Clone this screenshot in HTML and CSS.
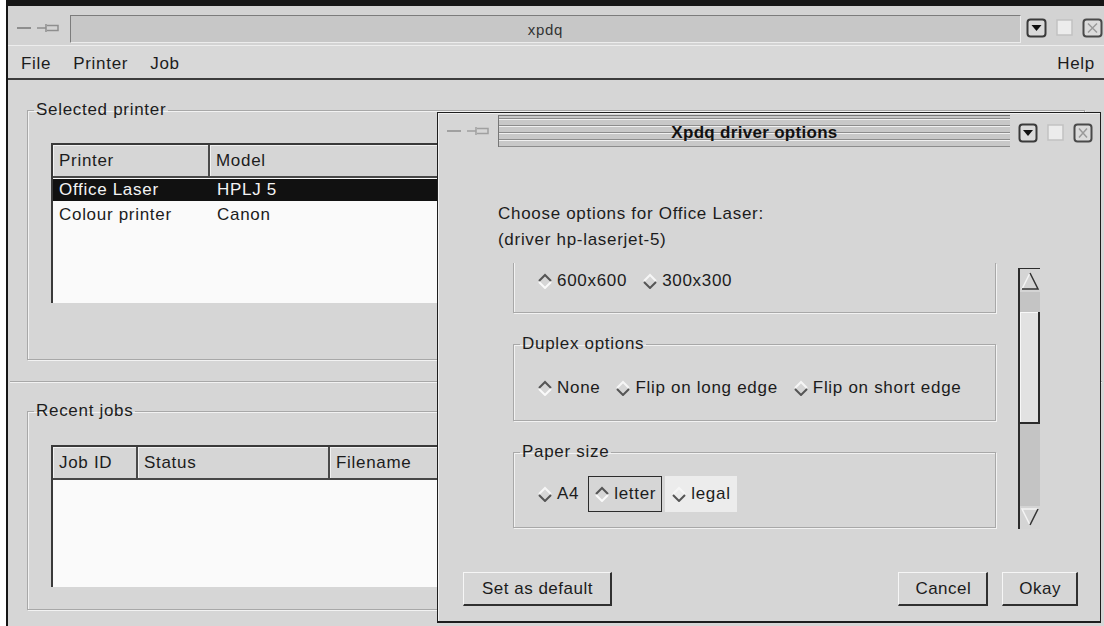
FILE: index.html
```html
<!DOCTYPE html>
<html>
<head>
<meta charset="utf-8">
<title>xpdq</title>
<link rel="stylesheet" href="styles.css">
</head>
<body>
<div class="main-win">
  <div class="titlebar">
    <div class="tb-left">
      <span class="tb-btn"><svg width="16" height="4" viewBox="0 0 16 4"><rect x="1" y="1" width="14" height="2" fill="#8e8e8e"/></svg></span>
      <span class="tb-btn"><svg width="24" height="12" viewBox="0 0 24 12"><path d="M1 6H10M10 2V10M11 3.5H22V8.5H11" fill="none" stroke="#8e8e8e" stroke-width="1.5"/></svg></span>
    </div>
    <div class="tb-field"><span class="tb-title">xpdq</span></div>
    <div class="tb-right">
      <span class="wbtn"><svg width="21" height="20" viewBox="0 0 21 20"><rect x="1.5" y="1.5" width="18" height="17" rx="3" fill="#dadada" stroke="#3a3a3a" stroke-width="2"/><path d="M5.5 7H15.5L10.5 13Z" fill="#111"/></svg></span>
      <span class="wbtn"><svg width="19" height="20" viewBox="0 0 19 20"><rect x="2" y="2" width="15" height="15" fill="#ececec" stroke="#c2c2c2" stroke-width="1.5"/></svg></span>
      <span class="wbtn"><svg width="21" height="20" viewBox="0 0 21 20"><rect x="1.5" y="1.5" width="18" height="17" rx="3" fill="#dcdcdc" stroke="#4a4a4a" stroke-width="2"/><path d="M6 5.5L15 14.5M15 5.5L6 14.5" stroke="#9a9a9a" stroke-width="1.5"/></svg></span>
    </div>
  </div>
  <div class="menubar">
    <span class="menu-item">File</span>
    <span class="menu-item">Printer</span>
    <span class="menu-item">Job</span>
    <span class="menu-fill"></span>
    <span class="menu-item">Help</span>
  </div>
  <div class="main-body">
    <fieldset class="group printers">
      <legend>Selected printer</legend>
      <div class="list printer-list">
        <div class="list-head">
          <span class="hcell col-printer">Printer</span>
          <span class="hcell col-model">Model</span>
        </div>
        <div class="list-rows">
          <div class="row selected"><span class="cell col-printer">Office Laser</span><span class="cell col-model">HPLJ 5</span></div>
          <div class="row"><span class="cell col-printer">Colour printer</span><span class="cell col-model">Canon</span></div>
        </div>
      </div>
    </fieldset>
    <div class="separator"></div>
    <fieldset class="group jobs">
      <legend>Recent jobs</legend>
      <div class="list job-list">
        <div class="list-head">
          <span class="hcell col-id">Job ID</span>
          <span class="hcell col-status">Status</span>
          <span class="hcell col-file">Filename</span>
        </div>
        <div class="list-rows"></div>
      </div>
    </fieldset>
  </div>
</div>

<div class="dialog">
  <div class="d-titlebar">
    <div class="d-tb-left">
      <span class="tb-btn"><svg width="16" height="4" viewBox="0 0 16 4"><rect x="1" y="1" width="14" height="2" fill="#a0a0a0"/></svg></span>
      <span class="tb-btn"><svg width="24" height="12" viewBox="0 0 24 12"><path d="M1 6H10M10 2V10M11 3.5H22V8.5H11" fill="none" stroke="#a0a0a0" stroke-width="1.5"/></svg></span>
    </div>
    <div class="d-tb-field"><span class="d-title">Xpdq driver options</span></div>
    <div class="d-tb-right">
      <span class="wbtn"><svg width="20" height="20" viewBox="0 0 20 20"><rect x="1.5" y="1.5" width="17" height="17" rx="3" fill="#dadada" stroke="#3a3a3a" stroke-width="2"/><path d="M5 7H15L10 13Z" fill="#111"/></svg></span>
      <span class="wbtn"><svg width="23" height="20" viewBox="0 0 23 20"><rect x="4" y="2" width="15" height="15" fill="#ececec" stroke="#c2c2c2" stroke-width="1.5"/></svg></span>
      <span class="wbtn"><svg width="20" height="20" viewBox="0 0 20 20"><rect x="1.5" y="1.5" width="17" height="17" rx="3" fill="#dcdcdc" stroke="#4a4a4a" stroke-width="2"/><path d="M6 5.5L14 14.5M14 5.5L6 14.5" stroke="#9a9a9a" stroke-width="1.5"/></svg></span>
    </div>
  </div>

  <div class="d-body">
    <p class="d-intro">Choose options for Office Laser:<br>(driver hp-laserjet-5)</p>

    <div class="scroll-area">
      <div class="viewport">
        <div class="frame clipped">
          <div class="radio-row">
            <span class="radio on"><svg width="16" height="16" viewBox="0 0 16 16"><polyline points="2,8 8,2 14,8" fill="none" stroke="#555" stroke-width="2"/><polyline points="2,9 8,15 14,9" fill="none" stroke="#fafafa" stroke-width="2"/></svg>600x600</span>
            <span class="radio"><svg width="16" height="16" viewBox="0 0 16 16"><polyline points="2,8 8,2 14,8" fill="none" stroke="#f6f6f6" stroke-width="2"/><polyline points="2,9 8,15 14,9" fill="none" stroke="#555" stroke-width="2"/></svg>300x300</span>
          </div>
        </div>

        <fieldset class="group frame">
          <legend>Duplex options</legend>
          <div class="radio-row">
            <span class="radio on"><svg width="16" height="16" viewBox="0 0 16 16"><polyline points="2,8 8,2 14,8" fill="none" stroke="#555" stroke-width="2"/><polyline points="2,9 8,15 14,9" fill="none" stroke="#fafafa" stroke-width="2"/></svg>None</span>
            <span class="radio"><svg width="16" height="16" viewBox="0 0 16 16"><polyline points="2,8 8,2 14,8" fill="none" stroke="#f6f6f6" stroke-width="2"/><polyline points="2,9 8,15 14,9" fill="none" stroke="#555" stroke-width="2"/></svg>Flip on long edge</span>
            <span class="radio"><svg width="16" height="16" viewBox="0 0 16 16"><polyline points="2,8 8,2 14,8" fill="none" stroke="#f6f6f6" stroke-width="2"/><polyline points="2,9 8,15 14,9" fill="none" stroke="#555" stroke-width="2"/></svg>Flip on short edge</span>
          </div>
        </fieldset>

        <fieldset class="group frame paper">
          <legend>Paper size</legend>
          <div class="radio-row">
            <span class="radio"><svg width="16" height="16" viewBox="0 0 16 16"><polyline points="2,8 8,2 14,8" fill="none" stroke="#f6f6f6" stroke-width="2"/><polyline points="2,9 8,15 14,9" fill="none" stroke="#555" stroke-width="2"/></svg>A4</span>
            <span class="radio on focus"><svg width="16" height="16" viewBox="0 0 16 16"><polyline points="2,8 8,2 14,8" fill="none" stroke="#555" stroke-width="2"/><polyline points="2,9 8,15 14,9" fill="none" stroke="#fafafa" stroke-width="2"/></svg>letter</span>
            <span class="radio hover"><svg width="16" height="16" viewBox="0 0 16 16"><polyline points="2,8 8,2 14,8" fill="none" stroke="#f6f6f6" stroke-width="2"/><polyline points="2,9 8,15 14,9" fill="none" stroke="#555" stroke-width="2"/></svg>legal</span>
          </div>
        </fieldset>
      </div>

      <div class="scrollbar">
        <span class="arrow"><svg width="20" height="23" viewBox="0 0 20 23"><polyline points="2,20 10,4" fill="none" stroke="#f4f4f4" stroke-width="1.5"/><polyline points="10,4 18,20 2,20" fill="none" stroke="#333" stroke-width="1.5"/></svg></span>
        <span class="trough top"></span>
        <span class="slider"></span>
        <span class="trough rest"></span>
        <span class="arrow"><svg width="20" height="23" viewBox="0 0 20 23"><polyline points="18,3 2,3 10,19" fill="none" stroke="#f4f4f4" stroke-width="1.5"/><polyline points="10,19 18,3" fill="none" stroke="#333" stroke-width="1.5"/></svg></span>
      </div>
    </div>

    <div class="d-buttons">
      <button class="btn">Set as default</button>
      <span class="btn-fill"></span>
      <button class="btn">Cancel</button>
      <button class="btn">Okay</button>
    </div>
  </div>
</div>
</body>
</html>
```

FILE: styles.css
```css
* {
  box-sizing: border-box;
}

html,
body {
  margin: 0;
}

body {
  position: relative;
  width: 1104px;
  height: 626px;
  overflow: hidden;
  background: #ffffff;
  font-family: "Liberation Sans", Arial, sans-serif;
  font-size: 17px;
  letter-spacing: 0.7px;
  color: #1c1c1c;
}

/* ---------- main application window ---------- */

.main-win {
  margin-left: 6px;
  width: 1098px;
  height: 626px;
  border-left: 2px solid #161616;
  border-top: 6px solid #161616;
  background: #d6d6d6;
  display: flex;
  flex-direction: column;
}

.titlebar {
  height: 39px;
  display: flex;
  background: #d3d3d3;
}

.tb-left {
  width: 62px;
  display: flex;
  align-items: center;
  padding-left: 8px;
  padding-top: 4px;
}

.tb-btn {
  display: inline-flex;
  align-items: center;
  justify-content: center;
  height: 20px;
  margin-right: 4px;
}

.tb-field {
  width: 951px;
  margin: 9px 0 2px;
  background: #c7c7c7;
  border-top: 1px solid #7c7c7c;
  border-left: 1px solid #7c7c7c;
  border-bottom: 1px solid #ececec;
  border-right: 1px solid #ececec;
  display: flex;
  align-items: center;
  justify-content: center;
}

.tb-title {
  font-size: 15px;
  color: #333;
}

.tb-right {
  display: flex;
  gap: 8px;
  padding: 12px 0 0 5px;
}

.wbtn {
  display: inline-flex;
  height: 20px;
}

.menubar {
  height: 35px;
  display: flex;
  align-items: center;
  padding: 4px 9px 0 2px;
  background: #d8d8d8;
  border-top: 1px solid #ededed;
  border-bottom: 2px solid #3c3c3c;
}

.menu-item {
  padding: 0 11px;
}

.menu-item:last-child {
  padding-right: 0;
}

.menu-fill {
  flex: 1;
}

.main-body {
  padding: 20px 19px 0;
}

/* etched group frame */
.group {
  margin: 0;
  padding: 0;
  min-width: 0;
  border: 1px solid #a8a8a8;
  box-shadow: inset 1px 1px 0 #f2f2f2, 1px 1px 0 #f2f2f2;
}

.group legend {
  margin-left: 6px;
  padding: 0 2px;
  line-height: 20px;
}

.printers {
  padding-bottom: 56px;
}

.jobs {
  margin-top: 18px;
  padding-bottom: 22px;
}

.separator {
  margin: 21px -17px 0;
  border-top: 1px solid #a8a8a8;
  border-bottom: 1px solid #f2f2f2;
}

/* list views */
.list {
  margin-left: 23px;
  width: 1010px;
  background: #fafafa;
  border-top: 2px solid #3a3a3a;
  border-left: 2px solid #3a3a3a;
  display: flex;
  flex-direction: column;
}

.printer-list {
  margin-top: 23px;
  height: 160px;
}

.job-list {
  margin-top: 24px;
  height: 142px;
}

.list-head {
  display: flex;
  height: 33px;
  background: #d6d6d6;
  border-bottom: 2px solid #474747;
}

.hcell {
  display: flex;
  align-items: center;
  padding-left: 6px;
  border-right: 2px solid #4a4a4a;
  box-shadow: inset 1px 1px 0 #f2f2f2;
}

.hcell:last-child {
  flex: 1;
  border-right: none;
}

.col-printer {
  width: 157px;
}

.col-id {
  width: 85px;
}

.col-status {
  width: 192px;
}

.list-rows {
  flex: 1;
  padding-top: 1px;
}

.row {
  display: flex;
  height: 22px;
  margin-bottom: 3px;
  align-items: center;
}

.row .cell {
  padding-left: 6px;
}

.row .col-printer {
  width: 157px;
}

.row .col-model {
  padding-left: 7px;
}

.row.selected {
  background: #111111;
  color: #f4f4f4;
}

/* ---------- driver options dialog ---------- */

.dialog {
  position: absolute;
  left: 437px;
  top: 112px;
  width: 664px;
  height: 511px;
  background: #d6d6d6;
  border: 1px solid #1e1e1e;
  border-bottom-width: 2px;
  box-shadow: inset 1px 1px 0 #f0f0f0;
  display: flex;
  flex-direction: column;
}

.d-titlebar {
  margin-top: 2px;
  height: 32px;
  display: flex;
}

.d-tb-left {
  width: 60px;
  display: flex;
  align-items: center;
  padding-left: 8px;
}

.d-tb-field {
  width: 512px;
  border-top: 1px solid #777;
  border-left: 1px solid #777;
  background:
    repeating-linear-gradient(to bottom,
      #c8c8c8 0, #c8c8c8 2px,
      #8c8c8c 2px, #8c8c8c 3px,
      #f0f0f0 3px, #f0f0f0 4px,
      #c8c8c8 4px, #c8c8c8 7px);
  display: flex;
  align-items: center;
  justify-content: center;
  padding-top: 3px;
}

.d-title {
  font-weight: bold;
  letter-spacing: 0.3px;
  color: #111;
}

.d-tb-right {
  display: flex;
  gap: 6px;
  padding: 8px 0 0 8px;
}

.d-body {
  flex: 1;
  display: flex;
  flex-direction: column;
  padding: 54px 0 15px 60px;
}

.d-intro {
  margin: 0;
  line-height: 26px;
}

.scroll-area {
  margin-top: 10px;
  display: flex;
}

.viewport {
  width: 505px;
  height: 266px;
  overflow: hidden;
  padding-left: 15px;
}

.frame {
  width: 483px;
}

.frame.clipped {
  height: 50px;
  border: 1px solid #a8a8a8;
  border-top: none;
  box-shadow: inset 1px 0 0 #f2f2f2, 1px 1px 0 #f2f2f2;
}

fieldset.frame {
  margin-top: 21px;
  padding-bottom: 14px;
}

fieldset.frame .radio-row {
  padding-top: 16px;
}

fieldset.frame.paper {
  padding-bottom: 15px;
}

fieldset.frame.paper .radio-row {
  padding-top: 14px;
}

.radio-row {
  display: flex;
  gap: 3px;
  padding-left: 17px;
}

.radio {
  display: inline-flex;
  align-items: center;
  gap: 4px;
  height: 36px;
  padding: 0 5px;
  border: 1px solid transparent;
}

.radio svg {
  flex: none;
}

.radio.focus {
  border-color: #2c2c2c;
}

.radio.hover {
  background: #ececec;
}

.scrollbar {
  margin-left: 15px;
  margin-top: 5px;
  width: 22px;
  height: 261px;
  background: #c4c4c4;
  border-left: 2px solid #2c2c2c;
  border-top: 1px solid #2c2c2c;
  display: flex;
  flex-direction: column;
}

.arrow {
  display: flex;
  height: 23px;
  background: #d4d4d4;
}

.trough.top {
  height: 20px;
}

.slider {
  height: 112px;
  background: #e2e2e2;
  border-right: 2px solid #2a2a2a;
  border-bottom: 2px solid #2a2a2a;
  box-shadow: inset 1px 1px 0 #f8f8f8;
}

.trough.rest {
  flex: 1;
}

.d-buttons {
  margin-top: auto;
  display: flex;
  gap: 14px;
  padding: 0 22px 0 0;
  margin-left: -35px;
}

.btn-fill {
  flex: 1;
}

.btn {
  height: 34px;
  padding: 0 15px 0 16px;
  font: inherit;
  letter-spacing: 0.5px;
  color: #1c1c1c;
  background: #d6d6d6;
  border-top: 1px solid #f6f6f6;
  border-left: 1px solid #f6f6f6;
  border-right: 2px solid #303030;
  border-bottom: 2px solid #303030;
  border-radius: 0;
}

.btn:first-child {
  padding: 0 17px 0 18px;
}
```
